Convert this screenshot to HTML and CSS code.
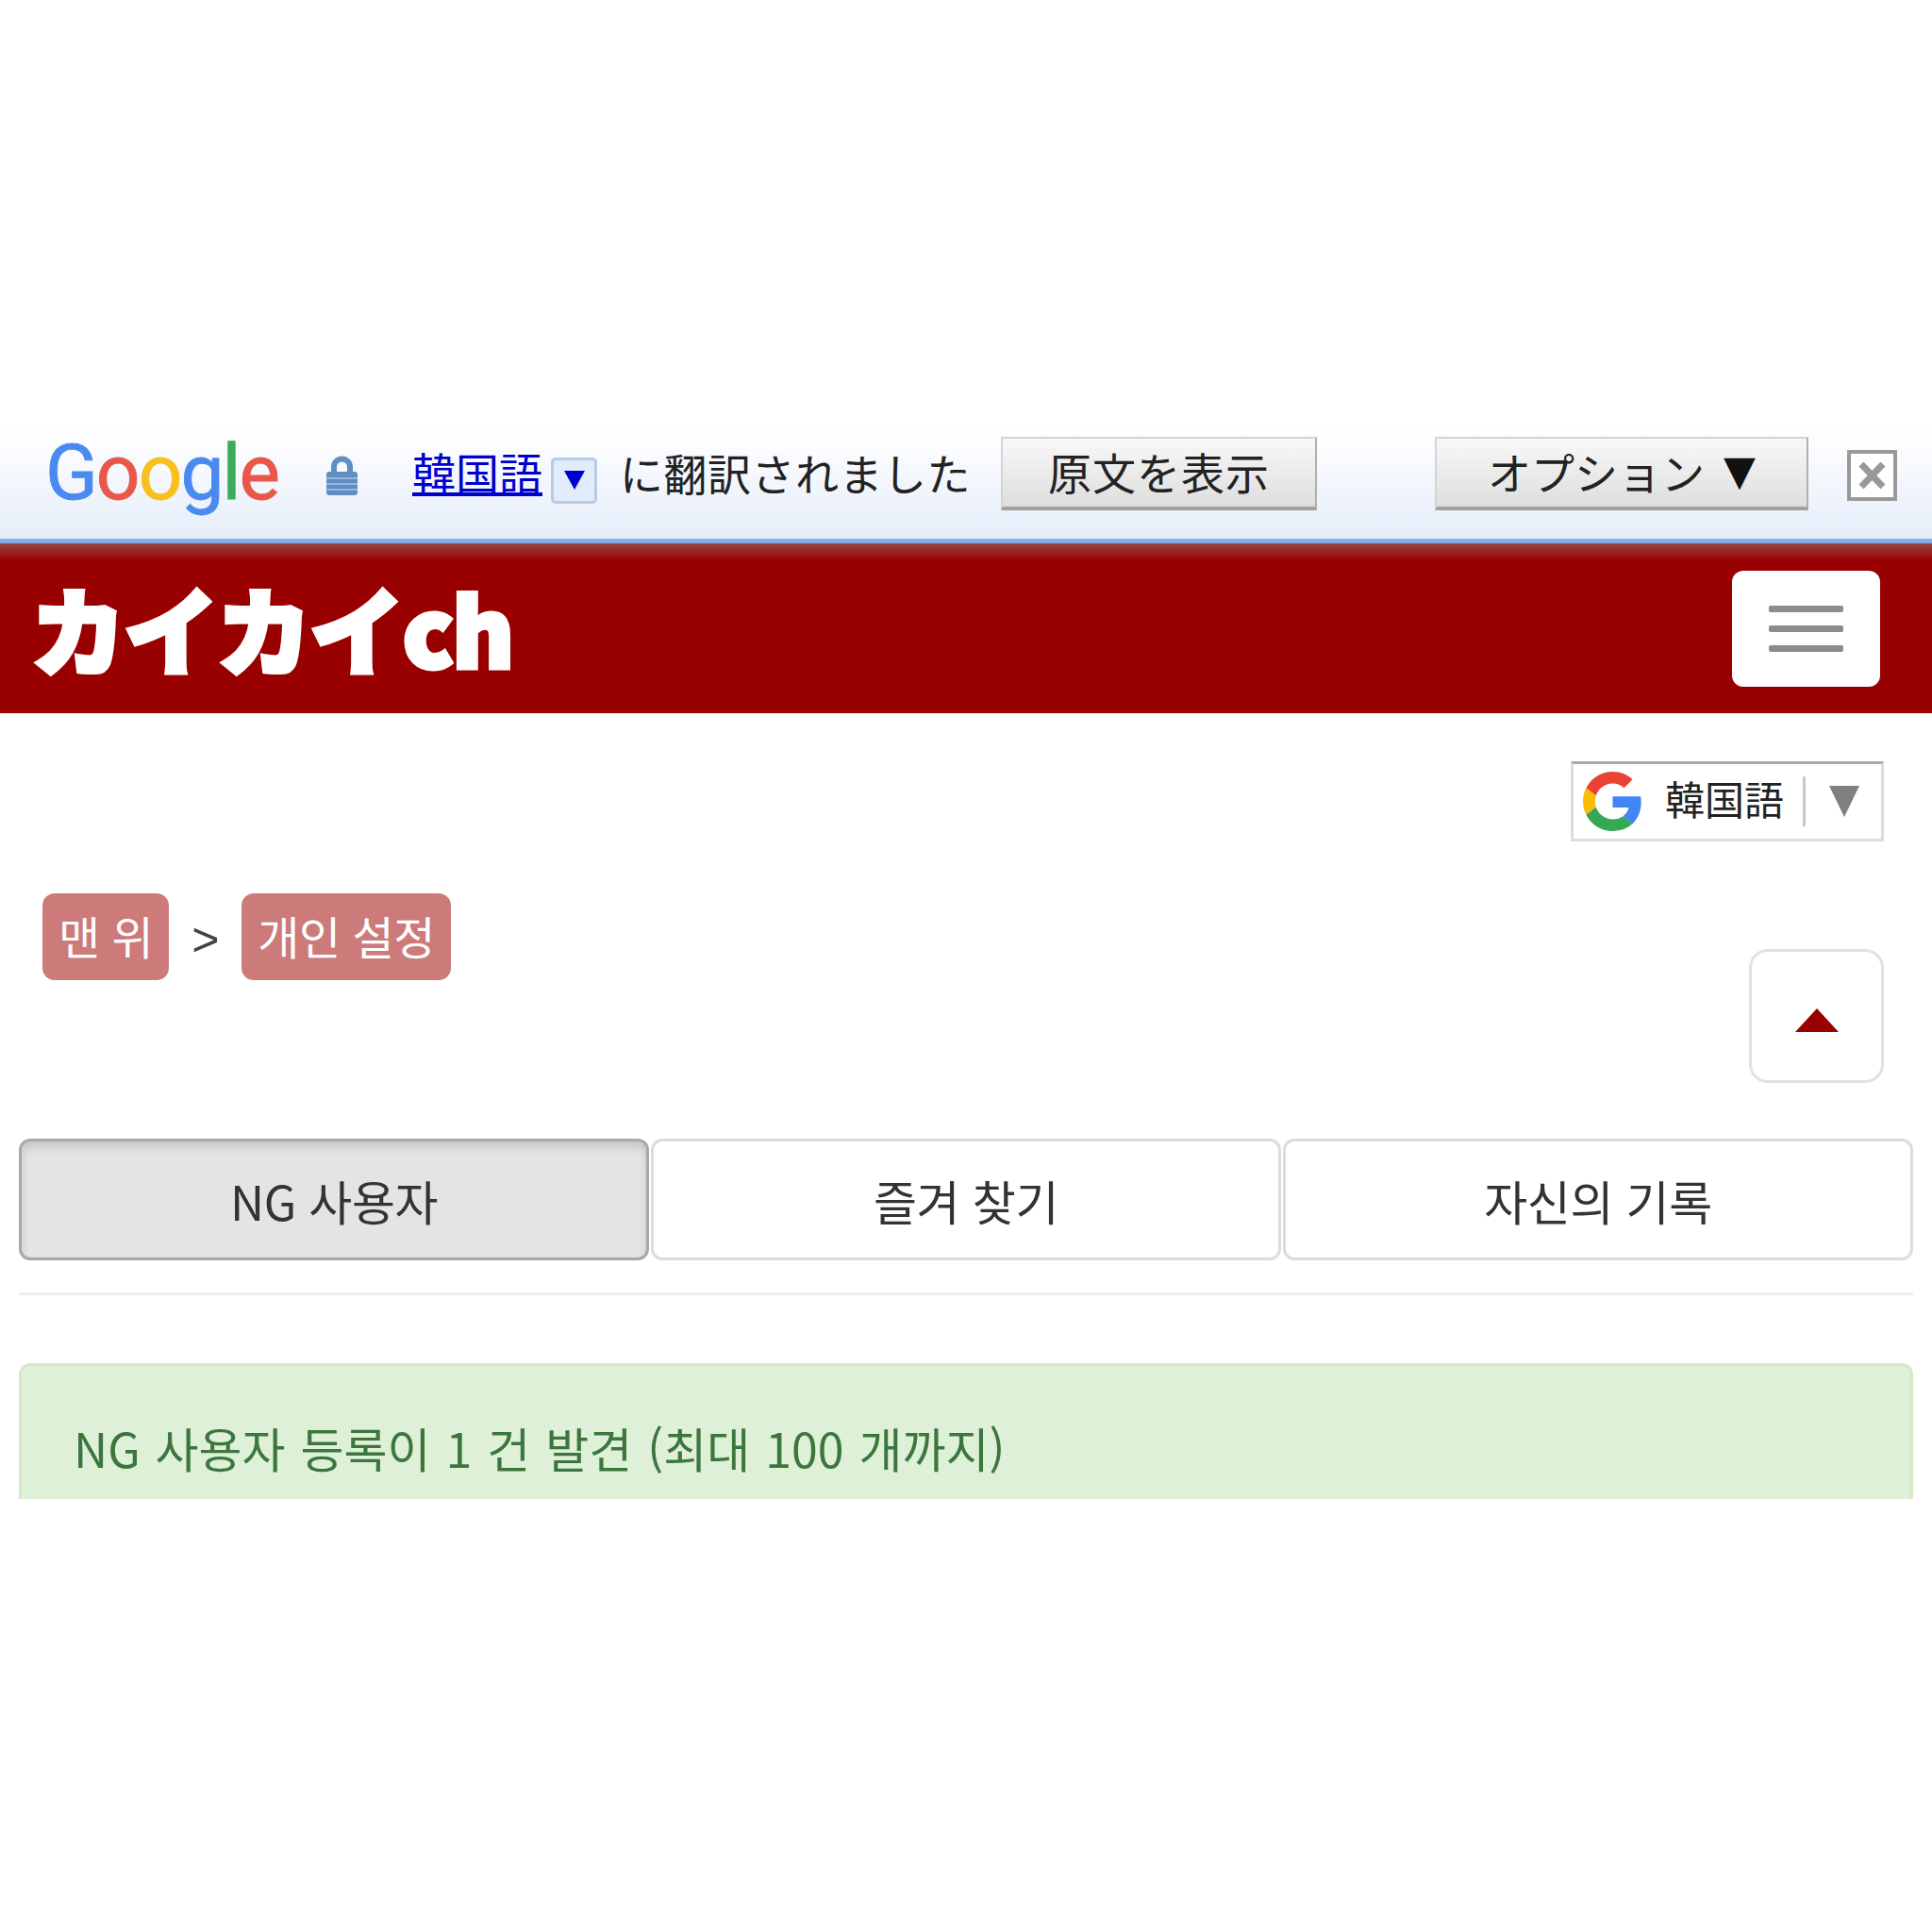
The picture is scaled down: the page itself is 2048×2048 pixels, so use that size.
FILE: index.html
```html
<!DOCTYPE html>
<html lang="ko">
<head>
<meta charset="utf-8">
<title>カイカイch</title>
<link rel="stylesheet" href="styles.css">
</head>
<body>
<div class="gbar">
  <div class="glogo"><span class="c-b">G</span><span class="c-r">o</span><span class="c-y">o</span><span class="c-b">g</span><span class="c-g">l</span><span class="c-r">e</span></div>
  <svg class="lock" viewBox="0 0 33 42"><path d="M5 20V12a11.500 11.500 0 0 1 23 0v8h-6V12a5.500 5.500 0 0 0-11 0v8z" fill="#5f8fc4"/><rect y="17" width="33" height="25" rx="3" fill="#5f8fc4"/><path d="M0 24h33M0 30h33M0 36h33" stroke="#a9c3e2" stroke-width="1.500"/></svg>
  <a class="glink" href="#">韓国語</a>
  <span class="gdd"><i class="gdd-tri"></i></span>
  <span class="gmsg">に翻訳されました</span>
  <span class="gbtn gbtn-orig">原文を表示</span>
  <span class="gbtn gbtn-opt">オプション<span class="opt-tri">▼</span></span>
  <svg class="gclose" viewBox="0 0 53 54"><rect x="2" y="2" width="49" height="50" fill="#fff" stroke="#999" stroke-width="4"/><path d="M15 15l23 24M38 15L15 39" stroke="#999" stroke-width="7"/></svg>
</div>
<header class="site">
  <div class="brand">カイカイch</div>
  <button class="burger"><i></i><i></i><i></i></button>
</header>
<main class="main">
  <div class="lang-row">
    <div class="lang">
      <svg class="lang-g" viewBox="0 0 48 48"><path fill="#EA4335" d="M24 9.500c3.540 0 6.710 1.220 9.210 3.600l6.850-6.850C35.900 2.380 30.470 0 24 0 14.620 0 6.510 5.380 2.560 13.220l7.980 6.190C12.430 13.720 17.740 9.500 24 9.500z"/><path fill="#4285F4" d="M46.980 24.550c0-1.570-.15-3.090-.38-4.550H24v9.020h12.940c-.58 2.960-2.260 5.480-4.780 7.180l7.730 6c4.510-4.180 7.090-10.360 7.090-17.650z"/><path fill="#FBBC05" d="M10.530 28.590c-.48-1.450-.76-2.990-.76-4.590s.27-3.140.76-4.590l-7.980-6.190C.92 16.460 0 20.120 0 24c0 3.880.92 7.540 2.560 10.780l7.970-6.190z"/><path fill="#34A853" d="M24 48c6.480 0 11.930-2.130 15.890-5.810l-7.730-6c-2.150 1.450-4.920 2.300-8.160 2.300-6.260 0-11.570-4.220-13.470-9.910l-7.980 6.190C6.510 42.620 14.620 48 24 48z"/></svg>
      <span class="lang-name">韓国語</span>
      <i class="lang-div"></i>
      <i class="lang-tri"></i>
    </div>
  </div>
  <div class="crumb-row">
    <nav class="crumbs">
      <a class="pill" href="#">맨 위</a>
      <span class="sep">&gt;</span>
      <a class="pill" href="#">개인 설정</a>
    </nav>
    <button class="up"><i class="up-tri"></i></button>
  </div>
  <div class="tabs">
    <div class="tab tab-on">NG 사용자</div>
    <div class="tab">즐겨 찾기</div>
    <div class="tab">자신의 기록</div>
  </div>
  <div class="rule"></div>
  <div class="alert">NG 사용자 등록이 1 건 발견 (최대 100 개까지)</div>
</main>
</body>
</html>
```
FILE: styles.css
```css
* { box-sizing: border-box; }
html, body { margin: 0; background: #fff; }
body {
  padding-top: 445px;
  font-family: "Noto Sans CJK KR", "Noto Sans CJK JP", sans-serif;
  color: #333;
}
.gbar {
  height: 131px;
  padding: 0 0 12px 48px;
  display: flex;
  align-items: center;
  background: linear-gradient(#fff, #fcfdff 20%, #e5edf9);
  border-bottom: 5px solid #88aee6;
  font-family: "Noto Sans CJK JP", sans-serif;
  font-size: 46px;
  color: #222;
}
.glogo {
  width: 244px;
  margin-top: -2px;
  font-family: Roboto, sans-serif;
  font-weight: 400;
  font-size: 82px;
  line-height: 78px;
  letter-spacing: -2px;
  -webkit-text-stroke: .8px currentColor;
  white-space: nowrap;
}
.c-b { color: #4a8af0; }
.c-r { color: #e8574a; }
.c-y { color: #f9bf1d; }
.c-g { color: #3fab5a; }
.lock { width: 33px; height: 42px; margin: 4px 0 0 54px; }
.glink { margin: -5px 0 0 58px; color: #0000cc; text-decoration: underline; line-height: 1.1; }
.gdd {
  width: 49px; height: 49px; margin: 14px 0 0 9px;
  display: flex; align-items: center; justify-content: center;
  background: #e0ebfb; border: 3px solid #b8cce3; border-radius: 5px;
}
.gdd-tri { border: 11px solid transparent; border-top: 20px solid #0000cc; border-bottom: 0; }
.gmsg { margin: -5px 0 0 24px; white-space: nowrap; width: 372px; letter-spacing: .5px; }
.gbtn {
  height: 78px;
  padding-bottom: 5px;
  display: flex; align-items: center; justify-content: center;
  background: linear-gradient(#f8f8f8, #dedede);
  border: 2px solid #d4d4d4;
  border-bottom: 4px solid #a0a0a0;
  border-right-color: #b0b0b0;
  white-space: nowrap;
  color: #222;
}
.gbtn-orig { width: 335px; margin-left: 32px; letter-spacing: 1px; }
.gbtn-opt { width: 396px; margin-left: 125px; }
.opt-tri { margin-left: 20px; font-family: "DejaVu Sans", sans-serif; font-size: 44px; line-height: 1; color: #111; }
.gclose { width: 53px; height: 54px; margin: 4px 0 0 41px; }
.site {
  height: 180px;
  padding: 0 55px 0 33px;
  display: flex;
  align-items: center;
  justify-content: space-between;
  background: linear-gradient(#964646, #990000 18px);
}
.brand {
  margin-top: -2px;
  font-family: "Noto Sans CJK JP", sans-serif;
  font-weight: 900;
  font-size: 100px;
  line-height: 1;
  letter-spacing: -1.500px;
  -webkit-text-stroke: 5px #fff;
  color: #fff;
  white-space: nowrap;
}
.burger {
  width: 157px; height: 123px; padding: 0;
  display: flex; flex-direction: column; align-items: center; justify-content: center; gap: 14px;
  background: #fff; border: 0; border-radius: 12px;
}
.burger i { display: block; width: 79px; height: 7px; border-radius: 2px; background: #8c8c8c; }
.main { display: block; }
.lang-row { padding: 51px 51px 0 0; display: flex; justify-content: flex-end; }
.lang {
  width: 332px; height: 85px;
  padding-left: 10px;
  display: flex; align-items: center;
  background: #fff;
  border: 3px solid #dcdcdc;
  border-top-color: #a8a8a8;
}
.lang-g { width: 63px; height: 63px; flex: none; }
.lang-name { margin: -8px 0 0 24px; font-family: "Noto Sans CJK JP", sans-serif; font-size: 42px; line-height: 1; color: #222; }
.lang-div { width: 3px; height: 53px; margin-left: 20px; background: #c8c8c8; }
.lang-tri { margin-left: 25px; border: 16px solid transparent; border-top: 33px solid #808080; border-bottom: 0; }
.crumb-row { padding: 55px 51px 0 45px; display: flex; justify-content: space-between; align-items: flex-start; }
.crumbs { display: flex; align-items: center; }
.pill {
  height: 92px; padding: 0 17px 4px;
  display: flex; align-items: center;
  background: #cc7a7a; border-radius: 13px;
  color: #fff; font-size: 48px; line-height: 1; letter-spacing: -.5px; text-decoration: none; white-space: nowrap;
}
.sep { width: 77px; padding-top: 6px; text-align: center; font-size: 50px; line-height: 1; color: #444; font-family: "Liberation Sans", sans-serif; }
.up {
  width: 143px; height: 142px; margin-top: 59px; padding: 0;
  display: flex; align-items: center; justify-content: center;
  background: #fff; border: 3px solid #e2e2e2; border-radius: 20px;
}
.up-tri { margin-top: 8px; border: 23px solid transparent; border-bottom: 25px solid #990000; border-top: 0; }
.tabs { margin: 59px 20px 0; display: grid; grid-template-columns: repeat(3, 1fr); gap: 2px; }
.tab {
  height: 129px;
  display: flex; align-items: center; justify-content: center;
  background: #fff; border: 3px solid #dcdcdc; border-radius: 12px;
  font-size: 50px; line-height: 1; letter-spacing: -.4px; color: #333;
}
.tab-on { background: #e4e4e4; border-color: #a8a8a8; box-shadow: inset 0 6px 8px rgba(0,0,0,.13); }
.rule { height: 3px; margin: 34px 20px 0; background: #eee; }
.alert {
  height: 144px; margin: 72px 20px 0; padding: 56px 55px 0;
  overflow: hidden;
  background: #dff0d8;
  border: 3px solid #d6e9c6; border-bottom: 0;
  border-radius: 12px 12px 0 0;
  color: #3c763d; font-size: 50px; line-height: 60px; word-spacing: 2px; white-space: nowrap;
}
```
